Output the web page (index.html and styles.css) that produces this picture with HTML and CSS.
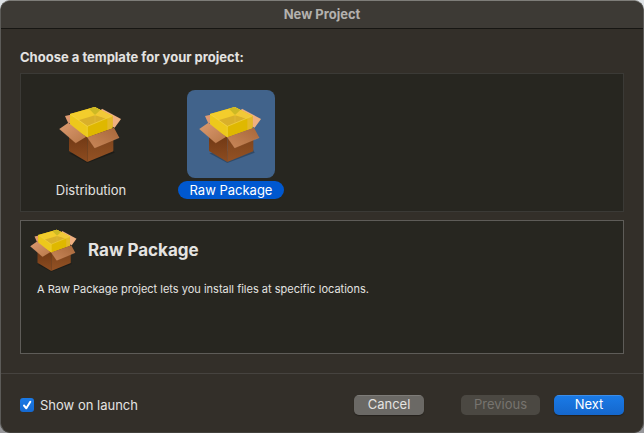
FILE: index.html
```
<!DOCTYPE html>
<html lang="en">
<head>
<meta charset="utf-8">
<title>New Project</title>
<link rel="stylesheet" href="styles.css">
</head>
<body>
<svg class="defs" aria-hidden="true">
  <defs>
    <linearGradient id="flap" x1="0" y1="0" x2="1" y2="1">
      <stop offset="0" stop-color="#dc9a70"/><stop offset="1" stop-color="#b87849"/>
    </linearGradient>
    <linearGradient id="flap-front" x1="0" y1="1" x2="1" y2="0">
      <stop offset="0" stop-color="#c98759"/><stop offset="1" stop-color="#a7673a"/>
    </linearGradient>
    <linearGradient id="side-left" x1="0" y1="0" x2="0" y2="1">
      <stop offset="0" stop-color="#6a3412"/><stop offset="1" stop-color="#8d4c20"/>
    </linearGradient>
    <linearGradient id="side-right" x1="0" y1="0" x2="0" y2="1">
      <stop offset="0" stop-color="#77401a"/><stop offset="1" stop-color="#945224"/>
    </linearGradient>
    <symbol id="package" viewBox="27 18 192 192">
      <path d="M58 172 112 201 194 170 188 158Z" fill="#000" opacity=".25"/>
      <path d="M45 60 62 56 64 84 54 80Z" fill="#e09a70"/>
      <path d="M156 38 213 69 194 95 132 66Z" fill="#eeb080"/>
      <path d="M57 100 112 122 112 198 57 165Z" fill="url(#side-left)"/>
      <path d="M112 122 190 105 190 166 112 198Z" fill="url(#side-right)"/>
      <path d="M60 54 134 33 187 60 187 97 112 124 60 92Z" fill="#e0b800"/>
      <path d="M60 54 134 33 187 60 112 91Z" fill="#f3cd2c"/>
      <path d="M80 74 135 58 172 68 112 91Z" fill="#d9b02a"/>
      <path d="M134 33 187 60 168 68 135 55Z" fill="#f1c838"/>
      <path d="M117 38 134 33 151 42 135 57Z" fill="#cdb924"/>
      <path d="M60 54 112 91 112 124 60 92Z" fill="#edc81c"/>
      <path d="M112 91 187 60 187 97 112 124Z" fill="#dfb800"/>
      <path d="M172 66 187 60 187 97 172 102Z" fill="#e4b928"/>
      <path d="M60 54 112 91 187 60M112 91V124" fill="none" stroke="#fae36a" stroke-width="2" opacity=".7"/>
      <path d="M135 55V80" fill="none" stroke="#fae36a" stroke-width="2" opacity=".3"/>
      <path d="M55 80 108 122 77 141 28 99Z" fill="url(#flap)"/>
      <path d="M112 124 192 95 208 125 134 156Z" fill="url(#flap-front)"/>
      <path d="M28 99 77 141 108 122M208 125 134 156 112 124" fill="none" stroke="#e5aa80" stroke-width="1" opacity=".5"/>
    </symbol>
  </defs>
</svg>
<main class="window">
  <header class="titlebar"><h1 class="title">New Project</h1></header>
  <section class="content">
    <h2 class="prompt">Choose a template for your project:</h2>
    <div class="templates">
      <button type="button" class="template">
        <span class="tile"><svg class="icon" aria-hidden="true"><use href="#package"/></svg></span>
        <span class="name">Distribution</span>
      </button>
      <button type="button" class="template selected" aria-pressed="true">
        <span class="tile"><svg class="icon" aria-hidden="true"><use href="#package"/></svg></span>
        <span class="name">Raw Package</span>
      </button>
    </div>
    <article class="details">
      <div class="details-head">
        <svg class="icon-small" aria-hidden="true"><use href="#package"/></svg>
        <h3 class="details-title">Raw Package</h3>
      </div>
      <p class="description">A Raw Package project lets you install files at specific locations.</p>
    </article>
  </section>
  <footer class="footer">
    <label class="launch" for="launch"><input class="check" type="checkbox" id="launch" checked><svg class="tick" viewBox="0 0 14 14" aria-hidden="true"><path d="M4 7.500 6.300 10.300 10.300 3.800"/></svg>Show on launch</label>
    <button type="button" class="btn cancel">Cancel</button>
    <button type="button" class="btn previous" disabled>Previous</button>
    <button type="button" class="btn next">Next</button>
  </footer>
</main>
</body>
</html>
```
FILE: styles.css
```
* { box-sizing: border-box; }
body {
  margin: 0;
  background: linear-gradient(#dfe3e6, #97979a);
  color: #e4e3e1;
  font: 13px/16px Inter, "Liberation Sans", sans-serif;
}
h1, h2, h3, p { margin: 0; }
button { font: inherit; color: inherit; border: 0; padding: 0; }
.defs { position: absolute; width: 0; height: 0; }
.window {
  display: flex;
  flex-direction: column;
  min-height: 100vh;
  background: #332f29;
  border: 1px solid #5c5b58;
  border-top-color: #7e7d79;
  border-bottom-color: #42403b;
  border-radius: 10px;
  overflow: hidden;
}
.titlebar {
  height: 28px;
  padding-top: 5px;
  background: #3d3a35;
  border-bottom: 1px solid #171613;
  text-align: center;
}
.title { font-size: 13px; line-height: 16px; font-weight: 700; color: #b3b1ae; }
.content { flex: 1; padding: 19px 19px 18px; }
.prompt { font-size: 13px; font-weight: 700; line-height: 18px; margin-bottom: 7px; }
.templates {
  display: flex;
  align-items: flex-start;
  gap: 34px;
  min-height: 139px;
  padding: 16px 17px 10px;
  background: #272620;
  border: 1px solid #3b3a36;
}
.template {
  display: flex;
  flex-direction: column;
  align-items: center;
  gap: 3px;
  width: 106px;
  background: none;
}
.tile {
  display: grid;
  place-items: center;
  width: 88px;
  height: 88px;
  border-radius: 8px;
}
.selected .tile { background: #41638b; }
.icon { width: 64px; height: 64px; }
.name { width: 100%; padding: 1px 0; border-radius: 9px; white-space: nowrap; }
.selected .name { background: #0058d0; color: #fff; }
.details {
  min-height: 134px;
  margin-top: 8px;
  padding: 5px 9px;
  background: #272620;
  border: 1px solid #5e5c58;
}
.details-head { display: flex; align-items: center; gap: 10px; }
.icon-small { width: 48px; height: 48px; }
.details-title { font-size: 17px; font-weight: 700; line-height: 20px; }
.description { margin: 7px 7px 0; font-size: 11px; }
.footer {
  display: flex;
  align-items: center;
  height: 59px;
  padding: 3px 19px 0;
  border-top: 1px solid #46433f;
}
.launch { display: grid; grid-template-columns: 14px auto; align-items: center; gap: 6px; margin-right: auto; }
.check {
  grid-area: 1 / 1;
  appearance: none;
  width: 14px;
  height: 14px;
  margin: 0;
  border-radius: 3px;
  background: linear-gradient(#1a7ae6, #1569d0);
}
.tick {
  grid-area: 1 / 1;
  width: 14px;
  height: 14px;
  fill: none;
  stroke: #fff;
  stroke-width: 2;
  stroke-linecap: round;
  stroke-linejoin: round;
  pointer-events: none;
  visibility: hidden;
}
.check:checked + .tick { visibility: visible; }
.btn {
  width: 70px;
  height: 20px;
  border-radius: 5px;
  line-height: 19px;
  box-shadow: 0 1px 1px #24211c;
}
.cancel { background: linear-gradient(#7e7c78 1px, #6b6965 1px); }
.previous { width: 79px; margin: 0 14px 0 37px; background: #4b4842; color: #77746f; box-shadow: none; }
.next { background: linear-gradient(#3a8dea 1px, #1a7ae6 1px, #1567cc); color: #fff; }
```
